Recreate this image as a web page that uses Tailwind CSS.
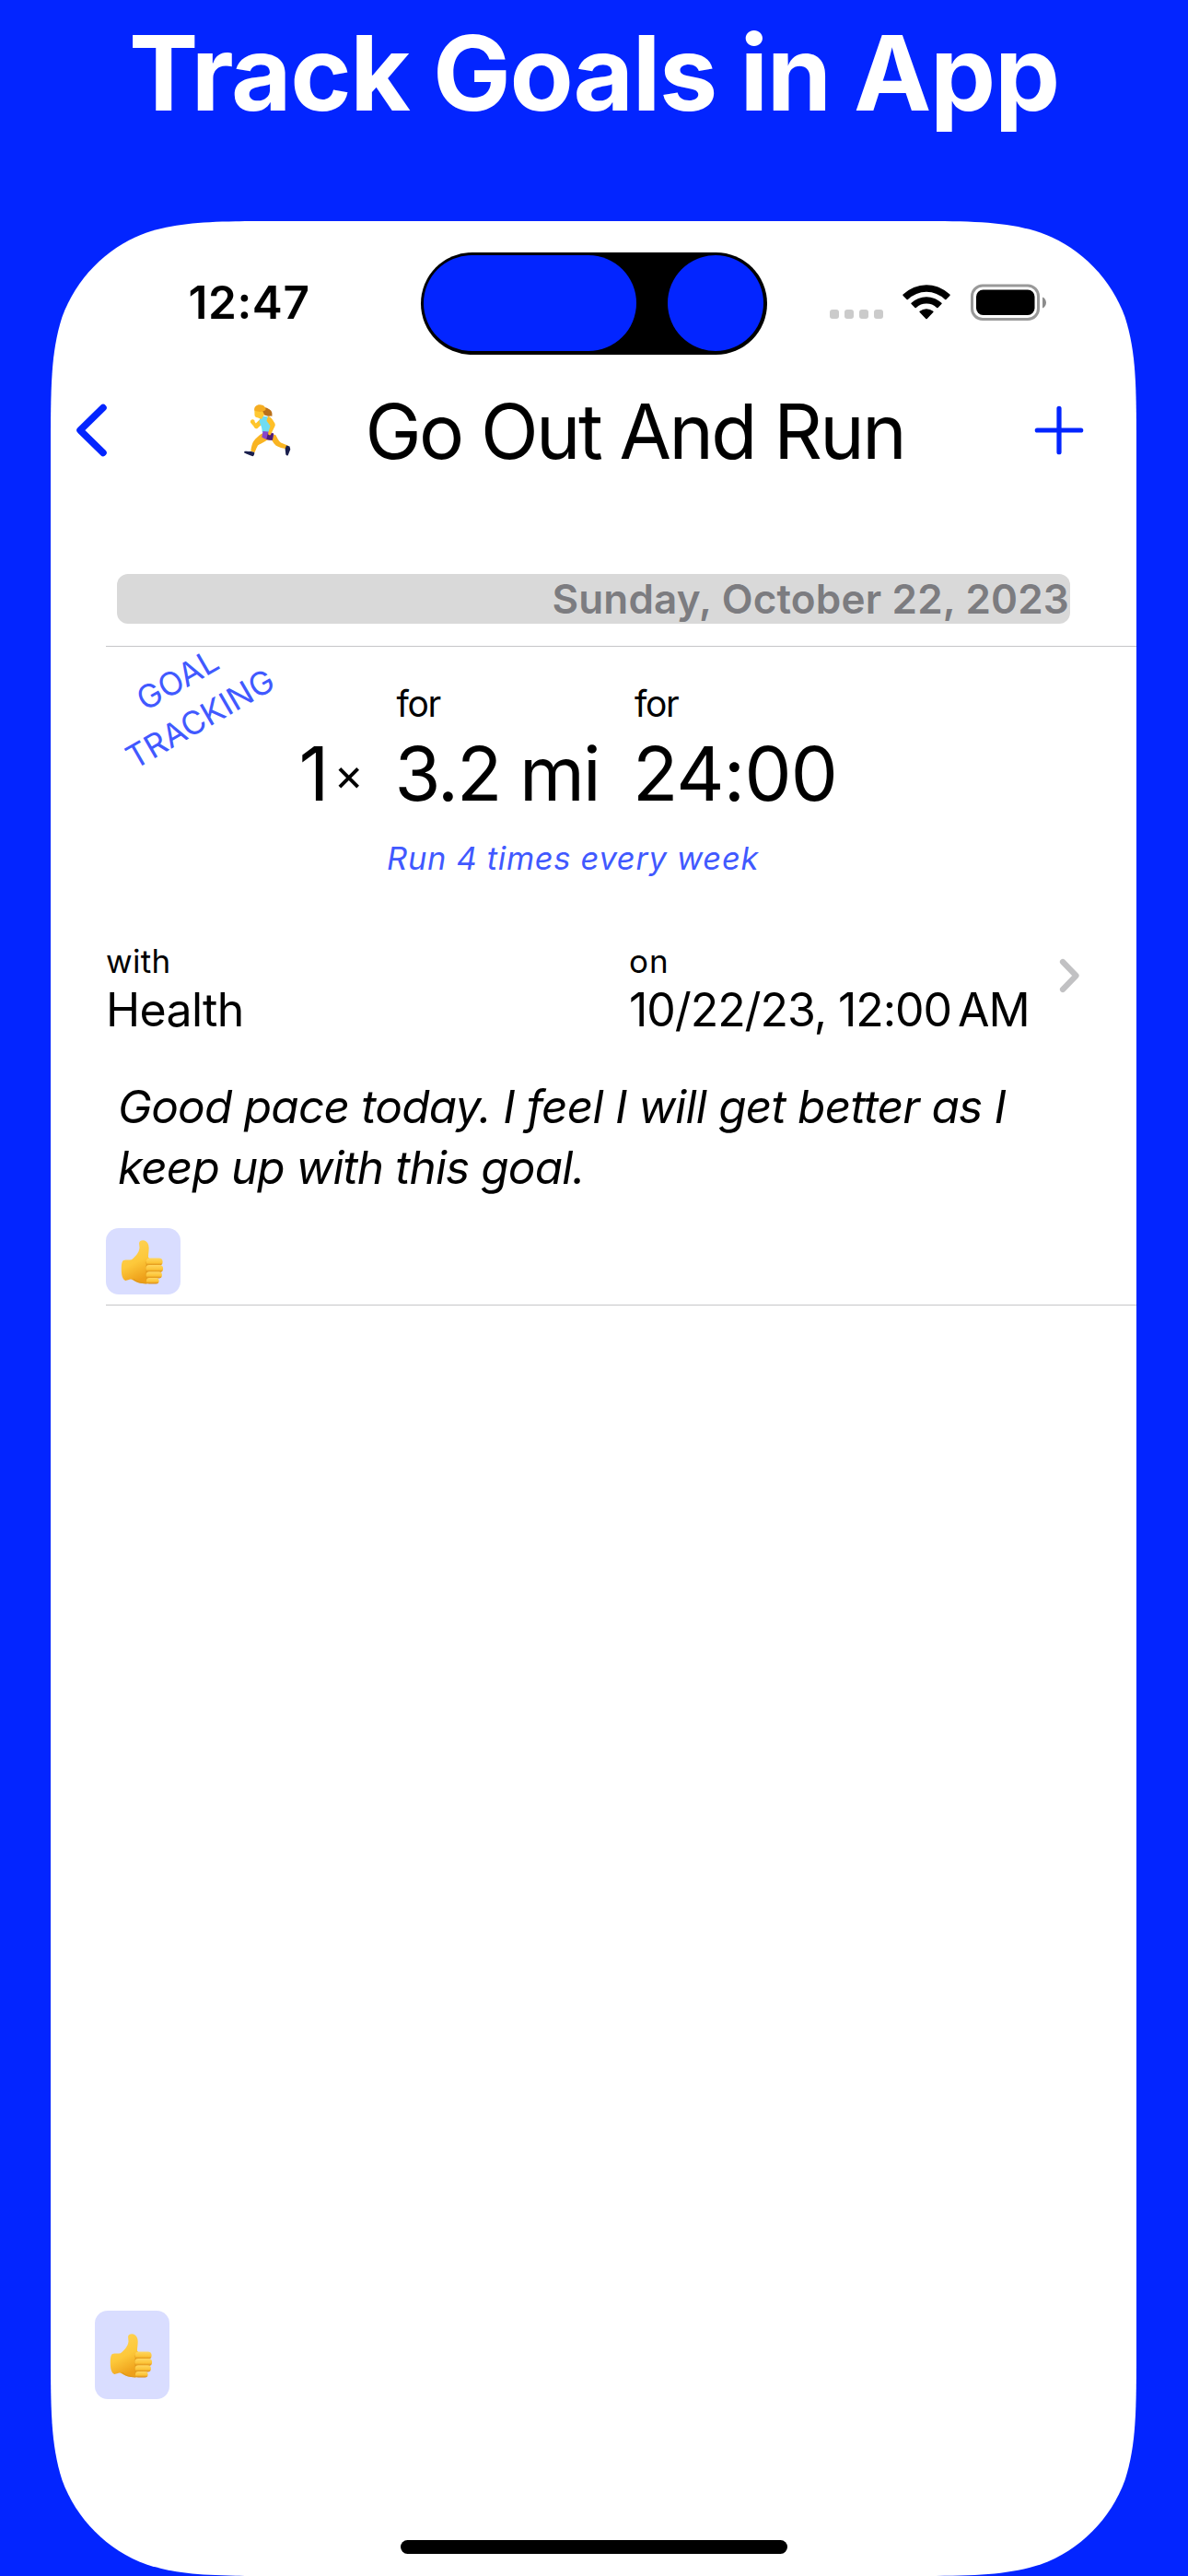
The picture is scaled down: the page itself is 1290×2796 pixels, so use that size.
<!DOCTYPE html>
<html lang="en">
<head>
<meta charset="utf-8">
<title>Track Goals in App</title>
<script src="https://cdn.jsdelivr.net/npm/@tailwindcss/browser@4"></script>
</head>
<body class="w-[1290px] h-[2796px] overflow-hidden bg-[#0325ff] font-['Inter',sans-serif] text-black">

<!-- Shared artwork -->
<svg class="absolute w-0 h-0" aria-hidden="true">
  <defs>
    <linearGradient id="skin" x1="0" y1="0" x2="0.35" y2="1">
      <stop offset="0" stop-color="#ffd55a"/><stop offset="0.6" stop-color="#fdc83a"/><stop offset="1" stop-color="#eea01a"/>
    </linearGradient>
    <linearGradient id="finger" x1="0" y1="0" x2="0" y2="1">
      <stop offset="0" stop-color="#ffd65e"/><stop offset="0.6" stop-color="#fcc437"/><stop offset="1" stop-color="#d98612"/>
    </linearGradient>
    <symbol id="thumb" viewBox="0 0 60 60">
      <path fill="url(#skin)" d="M28 7.300C31 5.100 35.800 6.500 37.200 11.200c1.200 4.200-.3 9.300-.2 13.300l4 4.500-1.500 23.800c-4.200.9-9.200.7-13-.5-3.200-1-5.200-2.600-7.600-3.600-2.400-.6-4.400 1.400-6.600 1.200C8.600 48.500 7.800 43 7.800 37.500c0-5 .6-8.800 2.200-9.600 3.300-.7 6.300 0 8.800-.7 4.500-3.200 8.200-7.700 8.700-12.700.1-2.900-1.300-5.600.5-7.200z"/>
      <path fill="none" stroke="#e09a1c" stroke-width="1.300" stroke-linecap="round" d="M35 30c1 2 0 5-.3 7.500 1 2 .7 4.500.2 6.500.6 2 .3 4 .3 5.500M21 48.600c3 2.600 8 4.100 14 4.200"/>
      <rect x="34.800" y="25.600" width="17.800" height="8.300" rx="4.100" fill="url(#finger)"/>
      <rect x="34.300" y="33" width="18.800" height="8" rx="4" fill="url(#finger)"/>
      <rect x="34.600" y="40.300" width="17.300" height="7.300" rx="3.600" fill="url(#finger)"/>
      <rect x="35" y="47" width="13.600" height="6.500" rx="3.200" fill="url(#finger)"/>
    </symbol>
  </defs>
</svg>

<h1 class="h-[240px] text-center text-[113px] leading-[158px] font-bold tracking-[-1.340px] whitespace-nowrap text-white">Track Goals in App</h1>

<main class="relative isolate ml-[55px] w-[1179px] h-[2556px] flex flex-col">
  <!-- Screen shape with continuous corners -->
  <svg class="absolute inset-0 -z-10" width="1179" height="2556" viewBox="0 0 1179 2556" fill="#fff">
    <path d="M252.200 0H926.800C999.400 0 1035.700 0 1074.800 12.400C1117.500 27.900 1151.100 61.500 1166.600 104.200C1179 143.300 1179 179.600 1179 252.200V2303.800C1179 2376.400 1179 2412.700 1166.600 2451.800C1151.100 2494.500 1117.500 2528.100 1074.800 2543.600C1035.700 2556 999.400 2556 926.800 2556H252.200C179.600 2556 143.300 2556 104.200 2543.600C61.500 2528.100 27.900 2494.500 12.400 2451.800C0 2412.700 0 2376.400 0 2303.800V252.200C0 179.600 0 143.300 12.400 104.200C27.900 61.500 61.500 27.900 104.200 12.400C143.300 0 179.600 0 252.200 0Z"/>
  </svg>

  <!-- Status bar -->
  <div class="mt-[33.500px] h-[111px] shrink-0 flex items-center">
    <div class="ml-[149.500px] w-[252px] text-[49.500px] leading-[60px] font-semibold tracking-[0.600px] -mt-[2px]">12:47</div>
    <div class="w-[376px] h-[111px] rounded-full bg-black p-[3.500px] flex justify-between">
      <div class="w-[231px] h-[104px] rounded-full bg-[#0325ff]"></div>
      <div class="w-[104px] h-[104px] rounded-full bg-[#0325ff]"></div>
    </div>
    <div class="ml-[68px] mt-[24px] flex gap-[6px]">
      <i class="size-[10px] rounded-[3px] bg-[#cbcbcb]"></i><i class="size-[10px] rounded-[3px] bg-[#cbcbcb]"></i><i class="size-[10px] rounded-[3px] bg-[#cbcbcb]"></i><i class="size-[10px] rounded-[3px] bg-[#cbcbcb]"></i>
    </div>
    <svg class="ml-[21.500px] -mt-[3px]" width="52" height="38" viewBox="0 0 52 38">
      <path d="M.6 10.600a36.500 36.500 0 0 1 50.800 0c.4.400.4.900 0 1.300l-4 4c-.4.400-.9.400-1.300 0a29 29 0 0 0-40.200 0c-.4.400-.9.400-1.300 0l-4-4c-.4-.4-.4-.9 0-1.300zM9.600 19.800a24 24 0 0 1 32.800 0c.4.400.4.900 0 1.300l-3.900 3.800c-.4.400-.9.400-1.300 0a16.500 16.500 0 0 0-22.400 0c-.4.400-.9.400-1.300 0l-3.900-3.800c-.4-.4-.4-.9 0-1.300zM18.700 28.800a11.500 11.500 0 0 1 14.600 0c.4.400.4.900 0 1.300l-6.600 6.900c-.4.400-1 .4-1.400 0l-6.600-6.900c-.4-.4-.4-.9 0-1.300z"/>
    </svg>
    <svg class="ml-[22px] -mt-[3px]" width="83" height="40" viewBox="0 0 83 40">
      <rect x="1.500" y="2" width="72" height="36.500" rx="11.500" fill="none" stroke="#999" stroke-width="3"/>
      <rect x="6" y="6.500" width="63.500" height="27.500" rx="7.500"/>
      <path fill="#8c8c8c" d="M78 14.500c5.300 2.200 5.300 9.800 0 12z"/>
    </svg>
  </div>

  <!-- Navigation bar -->
  <header class="h-[164.500px] shrink-0 flex items-center">
    <svg class="ml-[25px]" width="40" height="64" viewBox="0 0 40 64" fill="none" stroke="#0325ff" stroke-width="7.500" stroke-linecap="round" stroke-linejoin="round"><path d="M32 7.500 7 32l25 24.500"/></svg>
    <svg class="ml-[140px]" width="62" height="64" viewBox="0 0 62 64">
      <path fill="#f4a91f" d="M32 33l5 3-2 6-8 1z"/>
      <path fill="#f9b422" d="M24.500 35.500l8 4c-2.500 4.500-9 6.500-12.500 9-1.200 2-2.300 5-3.600 7.700l-4.100-1.700c.5-4 1.500-8.500 3.200-10.800 2-2.700 5.500-6 9-8.200zM33.500 38l5.500-1.200c2 3 3.200 6.800 6 8.700l8 3.200-1.200 3.800c-4.300-.7-9.600-2-12.300-4-3-2.700-5-6.700-6-10.500z"/>
      <path fill="#ffc52b" d="M25 17.500l3 4.500-8.500 8c-2 .7-3.300-.3-4-2.200l-2.800-3.300c-1.300-1-1-3.500.6-4 1.800-.6 3.600.5 3.300 2.300l1.200 1.700z"/>
      <path fill="#6fdcf2" d="M23 17.500c3.300-1.500 7.500-.5 9.800 1.500 2.300 2.700 2.200 6 1.700 9l-1 7.500-8.700-1.200c-.4-3-.3-5.600-2-8.300-1.200-2.800-1.600-6.200.2-8.500z"/>
      <path fill="#8a45c8" d="M25.500 33l8 .8 4 2.200-2 6.500c-4 .5-8.200-1-11.200-3z"/>
      <path fill="#4c1c75" d="M31 35l6 .5-1 7.200c-2.300.4-4.700-.2-6.700-1z"/>
      <path fill="#ffbf27" d="M31 17c3.200.3 5.300 3.700 7.300 7.300 1 2 .3 3.300-.4 4.500l-4.200 8.400c-1.500.4-2.800-.4-2.600-2l2.400-8-4-5.500z"/>
      <path fill="#b9701a" d="M22 8.500c2.500-2.500 7-1.500 9.500.2 2.700 1.300 4.700 3.200 3.800 8.200-2.300-1.200-3.800.8-6.300-.8-3.200-.6-6-3.800-7-7.600z"/>
      <path fill="#ffc832" d="M16.300 10h8.200l2.500 5-3 5-4.500-1.700c-1.700 0-2.800-1-3-2.500z"/>
      <path fill="#f5ad21" d="M16.200 10.500C15.500 6.500 19 4 22.300 4.300c4 .2 6.500 2.700 6.200 5.700-3.500 2.500-7.500 2.500-12.300.5z"/>
      <path fill="#1a1f4d" d="M6.300 54.800c2.500-.4 4.500.6 6.500.2l3.400 1c.4 1.700-.5 3.500-1.500 4.200-3-.7-6.700-2.500-9.700-4 0-.8.500-1.300 1.300-1.400zM51 48.500l3.500 1 .8 3.200-2.600 6.600c-1.300.6-2.600-.4-2.500-2l-.6-5z"/>
    </svg>
    <h2 class="ml-[74.500px] mt-[4px] w-[640px] text-[82px] leading-[100px] tracking-[-2.640px] whitespace-nowrap">Go Out And Run</h2>
    <svg class="ml-[86.500px]" width="54" height="54" viewBox="0 0 54 54" fill="none" stroke="#0325ff" stroke-width="5.200" stroke-linecap="round"><path d="M3.300 27h47.400M27 3.300v47.400"/></svg>
  </header>

  <!-- Day header -->
  <div class="mt-[74px] ml-[72px] w-[1035px] h-[54px] shrink-0 rounded-[12px] bg-[#d9d9d9] text-right text-[44px] leading-[54px] font-semibold text-[#7c7c80] tracking-[0.190px] pr-px whitespace-nowrap">Sunday, October 22, 2023</div>

  <!-- Activity entry -->
  <article class="relative mt-[24px] ml-[60px] h-[716px] shrink-0 border-y border-[#c6c6c8] flex flex-col">
    <!-- Slanted goal badge -->
    <div class="absolute left-[-10px] top-[8px] w-[200px] -rotate-30 text-center text-[35px] leading-[49px] text-[#4159ff]">GOAL<br>TRACKING</div>

    <div class="mt-[38px] flex items-end whitespace-nowrap">
      <div class="ml-[209.500px] w-[107px] flex items-baseline"><span class="text-[81px] leading-[96px]">1</span><span class="relative -top-[11px] left-[4px] text-[49px] leading-[60px] ml-px">×</span></div>
      <div class="w-[257.500px]">
        <div class="text-[39px] leading-[48px] tracking-[-1.300px] -ml-px">for</div>
        <div class="mt-[3.500px] text-[81px] leading-[96px] tracking-[-2.050px] -ml-[3px]">3.2 mi</div>
      </div>
      <div>
        <div class="text-[39px] leading-[48px] tracking-[-1.300px]">for</div>
        <div class="mt-[3.500px] text-[81px] leading-[96px] tracking-[-0.800px] -ml-[2px]">24:00</div>
      </div>
    </div>
    <p class="mt-[20px] ml-[305px] text-[34.500px] leading-[48px] italic tracking-[0.680px] text-[#4159ff]">Run 4 times every week</p>

    <div class="mt-[65.500px] flex">
      <div class="w-[568px]">
        <div class="text-[35px] leading-[44px] tracking-[0.300px]">with</div>
        <div class="text-[50px] leading-[60px] tracking-[-0.650px] mt-px">Health</div>
      </div>
      <div class="w-[467px] whitespace-nowrap">
        <div class="text-[35px] leading-[44px] tracking-[1px]">on</div>
        <div class="text-[50px] leading-[60px] tracking-[-1.060px] mt-px">10/22/23, 12:00&#8202;&#8202;AM</div>
      </div>
      <svg class="mt-[18px]" width="24" height="40" viewBox="0 0 24 40" fill="none" stroke="#c1c1c3" stroke-width="6.200" stroke-linecap="round" stroke-linejoin="round"><path d="M4 5l14.500 15L4 35"/></svg>
    </div>

    <p class="mt-[42px] ml-[13px] text-[49.500px] leading-[66px] italic tracking-[-0.770px] whitespace-nowrap">Good pace today. I feel I will get better as I<br><span class="tracking-[-0.890px]">keep up with this goal.</span></p>

    <div class="mt-auto mb-[11px] w-[81px] h-[72px] rounded-[14px] bg-[#d9ddff] pl-[9px] pt-[7px]"><svg width="60" height="60"><use href="#thumb"/></svg></div>
  </article>

  <!-- Reaction button -->
  <div class="mt-auto mb-[153px] ml-[48px] w-[81px] h-[96px] shrink-0 rounded-[14px] bg-[#d9ddff] pl-[9px] pt-[19px]"><svg width="60" height="60"><use href="#thumb"/></svg></div>

  <!-- Home indicator -->
  <div class="mx-auto mb-[24px] w-[420px] h-[15px] shrink-0 rounded-full bg-black"></div>
</main>
</body>
</html>
